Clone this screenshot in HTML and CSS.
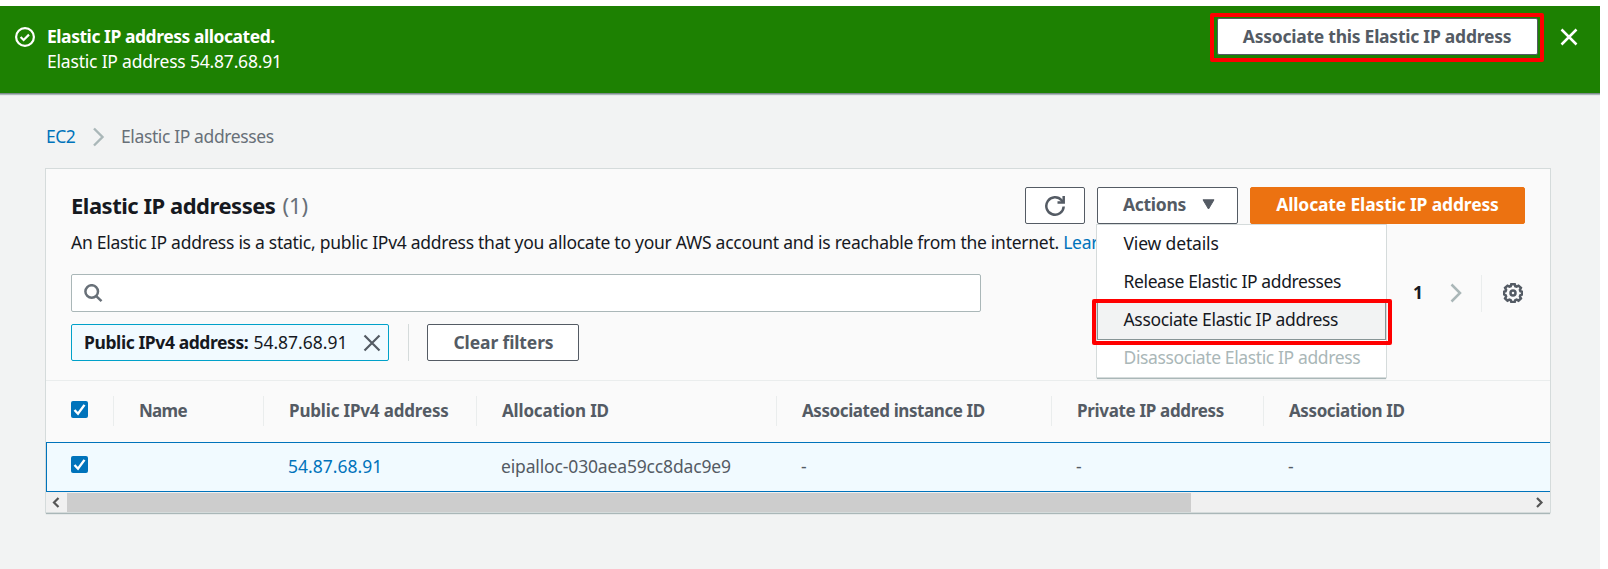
FILE: index.html
```html
<!DOCTYPE html>
<html lang="en">
<head>
<meta charset="utf-8">
<title>Elastic IP addresses</title>
<link rel="stylesheet" href="styles.css">
</head>
<body>
<div class="page">
  <div class="flash">
    <svg class="flash-icon" width="20" height="20" viewBox="0 0 20 20"><circle cx="10" cy="10" r="8.900"/><path d="M5.600 10l3 3 5.400-5.400"/></svg>
    <div class="flash-text">
      <div class="flash-title">Elastic IP address allocated.</div>
      <div class="flash-sub">Elastic IP address 54.87.68.91</div>
    </div>
    <div class="flash-mark"><button class="btn flash-btn">Associate this Elastic IP address</button></div>
    <svg class="flash-close" width="18" height="18" viewBox="0 0 18 18"><path d="M1.500 1.500l15 15M16.500 1.500l-15 15"/></svg>
  </div>

  <nav class="crumbs">
    <a class="crumb-link">EC2</a>
    <svg class="crumb-sep" width="13" height="20" viewBox="0 0 13 20"><path d="M2 1.500l8.500 8.500L2 18.500"/></svg>
    <span class="crumb-here">Elastic IP addresses</span>
  </nav>

  <section class="card">
    <div class="head">
      <div class="head-row">
        <h1 class="title">Elastic IP addresses<span class="count">(1)</span></h1>
        <button class="btn refresh"><svg width="20" height="20" viewBox="0 0 20 20"><path d="M18.700 10.500A8.700 8.700 0 1 1 16.600 4.300L18 6"/><path d="M12.500 6.500h6.200V0"/></svg></button>
        <div class="actions">
          <button class="btn actions-btn"><span>Actions</span><svg width="13" height="11" viewBox="0 0 13 11"><path d="M1 .800h11L6.500 10z"/></svg></button>
          <div class="menu">
            <div class="item item-view">View details</div>
            <div class="item item-release">Release Elastic IP addresses</div>
            <div class="item item-associate">Associate Elastic IP address<span class="menu-mark"></span></div>
            <div class="item item-off">Disassociate Elastic IP address</div>
          </div>
        </div>
        <button class="btn allocate">Allocate Elastic IP address</button>
      </div>
      <p class="desc">An Elastic IP address is a static, public IPv4 address that you allocate to your AWS account and is reachable from the internet. <a class="learn">Lear</a></p>
      <div class="tools">
        <div class="search"><svg width="19" height="19" viewBox="0 0 19 19"><circle cx="7.700" cy="7.500" r="6.300"/><path d="M12 11.800l5.500 5.400"/></svg></div>
        <div class="pager">
          <span class="page-no">1</span>
          <svg class="next" width="12" height="20" viewBox="0 0 12 20"><path d="M1.500 1.500L10 10l-8.500 8.500"/></svg>
          <span class="pager-line"></span>
          <svg class="gear" width="20" height="20" viewBox="0 0 20 20"><path d="M8.300 1.200h3.400l.6 2 1.300.5 1.900-1 2.400 2.200-1 2 .5 1.300 1.700.6v2.600l-1.700.7-.5 1.300 1 2-2.400 2.300-1.900-1-1.300.5-.6 1.800H8.300l-.6-1.800-1.300-.5-1.900 1-2.400-2.300 1-2-.5-1.300-1.600-.7V8.800l1.600-.6.5-1.300-1-2 2.400-2.200 1.900 1 1.300-.5z"/><circle cx="10" cy="10" r="2.500"/></svg>
        </div>
      </div>
      <div class="filters">
        <div class="token"><b>Public IPv4 address:</b><span>54.87.68.91</span><svg width="18" height="18" viewBox="0 0 18 18"><path d="M1.500 1.500l15 15M16.500 1.500l-15 15"/></svg></div>
        <span class="filter-line"></span>
        <button class="btn clear">Clear filters</button>
      </div>
    </div>

    <div class="row thead">
      <div class="cell check"><svg class="box" width="17" height="17" viewBox="0 0 17 17"><rect width="17" height="17" rx="2"/><path d="M3.500 9l3.500 3.700 6.500-8.800"/></svg></div>
      <div class="cell th-name">Name</div>
      <div class="cell th-ip">Public IPv4 address</div>
      <div class="cell th-alloc">Allocation ID</div>
      <div class="cell th-inst">Associated instance ID</div>
      <div class="cell th-priv">Private IP address</div>
      <div class="cell th-assoc">Association ID</div>
    </div>
    <div class="row trow">
      <div class="cell check"><svg class="box" width="17" height="17" viewBox="0 0 17 17"><rect width="17" height="17" rx="2"/><path d="M3.500 9l3.500 3.700 6.500-8.800"/></svg></div>
      <div class="cell"></div>
      <div class="cell ip">54.87.68.91</div>
      <div class="cell alloc-id">eipalloc-030aea59cc8dac9e9</div>
      <div class="cell">-</div>
      <div class="cell">-</div>
      <div class="cell">-</div>
    </div>
    <div class="scroll">
      <svg class="arrow" width="21" height="20" viewBox="0 0 21 20"><path d="M12.500 6L8 10.500l4.500 4.500"/></svg>
      <span class="thumb"></span>
      <svg class="arrow" width="21" height="20" viewBox="0 0 21 20"><path d="M8 6l4.500 4.500L8 15"/></svg>
    </div>
  </section>
</div>
</body>
</html>
```
FILE: styles.css
```css
* { box-sizing: border-box; }

body {
  margin: 0;
  background: #fff;
  color: #16191f;
  font: 17.5px/25px "Noto Sans", sans-serif;
}

svg { display: block; flex: none; fill: none; stroke: currentColor; stroke-width: 2.2; }

.page {
  width: 1600px;
  height: 569px;
  padding-top: 6px;
  background: linear-gradient(#fff 6px, #f2f3f3 6px);
  overflow: hidden;
}

.btn {
  display: flex;
  align-items: center;
  justify-content: center;
  height: 37px;
  padding: 0;
  border: 1px solid #545b64;
  border-radius: 2px;
  background: #fff;
  color: #545b64;
  font: 700 17.5px/25px "Noto Sans", sans-serif;
  white-space: nowrap;
}

/* Success banner */
.flash {
  display: flex;
  align-items: flex-start;
  height: 87px;
  padding: 7px 22px 0 15px;
  background: #1d8102;
  color: #fff;
  box-shadow: 0 1px 0 0 #7f8c8d, 0 2px 1px 0 #aab7b8;
}
.flash-icon { margin: 14px 12px 0 0; }
.flash-text { flex: 1; padding-top: 11px; }
.flash-title { font-weight: 700; letter-spacing: -.455px; }
.flash-sub { letter-spacing: -.2px; }
.flash-mark { width: 334px; height: 49px; padding: 1px; border: 4px solid #f00; border-radius: 2px; }
.flash-btn { width: 321px; margin: 0 auto; letter-spacing: -.244px; }
.flash-close { margin: 15px 0 0 16px; stroke-width: 2.500; }

/* Breadcrumbs */
.crumbs { display: flex; align-items: center; height: 25px; margin: 31px 0 20px 46px; }
.crumb-link { width: 46px; color: #0073bb; letter-spacing: -.5px; }
.crumb-sep { color: #aab7b8; margin-right: 16px; stroke-width: 2.400; }
.crumb-here { color: #687078; letter-spacing: -.38px; }

/* Table card */
.card {
  width: 1504px;
  margin-left: 46px;
  background: #fafafa;
  box-shadow: 0 0 0 1px #d5dbdb, 0 1px 0 0 #879596, 0 2px 1px 0 #aab7b8;
}
.head { height: 212px; padding: 18px 25px 0; border-bottom: 1px solid #eaeded; }
.head-row { display: flex; align-items: center; height: 37px; gap: 12px; }
.title { flex: 1; margin: 0; padding-bottom: 2px; font-size: 22px; line-height: 30px; letter-spacing: -.48px; }
.count { margin-left: 7px; color: #687078; font-weight: 400; letter-spacing: 0; }
.refresh { width: 60px; }
.refresh svg { stroke-width: 2.500; }
.actions { position: relative; }
.actions-btn { width: 141px; padding: 0 0 2px 3px; gap: 16px; letter-spacing: -.3px; }
.actions-btn svg { fill: currentColor; stroke-width: 1; stroke-linejoin: round; }
.allocate { width: 275px; padding-bottom: 2px; border-color: #ec7211; background: #ec7211; color: #fff; letter-spacing: -.153px; }

.menu {
  position: absolute;
  z-index: 2;
  top: 38px;
  left: 0;
  width: 289px;
  height: 152px;
  background: #fff;
  box-shadow: 0 0 0 1px #d5dbdb, 0 1px 0 0 #879596, 0 2px 1px 0 #aab7b8;
}
.item { height: 38px; padding: 5.500px 0 0 26.500px; white-space: nowrap; }
.item-view { letter-spacing: -.15px; }
.item-release { letter-spacing: -.38px; }
.item-associate {
  position: relative;
  height: 39px;
  padding: 5px 0 0 25.500px;
  border: 1px solid #879596;
  background: #f2f3f3;
  letter-spacing: -.343px;
}
.menu-mark {
  position: absolute;
  top: -3px;
  left: -6px;
  width: 300px;
  height: 46px;
  border: 4px solid #f00;
  border-radius: 2px;
}
.item-off { padding-top: 4.500px; color: #aab7b8; letter-spacing: -.38px; }

.desc { margin: 6px 0 19px; letter-spacing: -.267px; white-space: nowrap; }
.learn { color: #0073bb; }

.tools { display: flex; align-items: center; justify-content: space-between; height: 38px; }
.search {
  display: flex;
  align-items: center;
  width: 910px;
  height: 38px;
  padding-left: 12px;
  border: 1px solid #aab7b8;
  border-radius: 2px;
  background: #fff;
  color: #687078;
}
.search svg { stroke-width: 2.500; }
.pager { display: flex; align-items: center; }
.page-no { padding-bottom: 1px; font-weight: 700; }
.next { margin: 0 19px 0 27px; color: #aab7b8; stroke-width: 2.500; }
.pager-line { width: 1px; height: 37px; background: #eaeded; }
.gear { margin: 0 2px 0 21px; color: #545b64; stroke-width: 2.500; }

.filters { display: flex; margin-top: 12px; }
.token {
  display: flex;
  align-items: center;
  width: 318px;
  height: 37px;
  padding-left: 12px;
  border: 1px solid #00a1c9;
  border-radius: 2px;
  background: #f1faff;
}
.token b { letter-spacing: -.41px; }
.token span { margin-left: 5px; letter-spacing: 0; }
.token svg { margin-left: 15px; color: #545b64; }
.filter-line { width: 1px; margin: 0 18px 0 19px; background: #d5dbdb; }
.clear { width: 152px; padding-left: 1px; letter-spacing: -.125px; }

/* Table */
.row { display: grid; grid-template-columns: 68px 150px 213px 300px 275px 212px 286px; }
.cell { padding-left: 25px; }

.box { fill: #0073bb; stroke: none; }
.box path { fill: none; stroke: #fff; stroke-width: 2.400; }

.thead { height: 61px; padding-top: 15px; color: #545b64; font-size: 17px; font-weight: 700; }
.thead .cell { height: 30px; padding-top: 2px; border-right: 1px solid #eaeded; }
.thead .cell:last-child { border-right: 0; }
.thead .check { padding-top: 5px; }
.th-name { letter-spacing: -.7px; }
.th-ip, .th-alloc { letter-spacing: -.17px; }
.th-inst { letter-spacing: -.41px; }
.th-priv { letter-spacing: -.33px; }
.th-assoc { letter-spacing: -.4px; }

.trow {
  height: 50px;
  border: solid #0073bb;
  border-width: 1px 0 1px 1px;
  background: #f1faff;
  color: #545b64;
}
.trow .cell { padding-top: 11px; margin-left: -2px; }
.trow .check { margin-left: -1px; padding-top: 13px; }
.ip { color: #0073bb; letter-spacing: 0; }
.alloc-id { letter-spacing: -.15px; }

.scroll { display: flex; height: 20px; background: #f0f0f0; color: #555; }
.thumb { width: 1124px; height: 19px; margin: 1px auto 0 0; background: #cdcdcd; }
```
